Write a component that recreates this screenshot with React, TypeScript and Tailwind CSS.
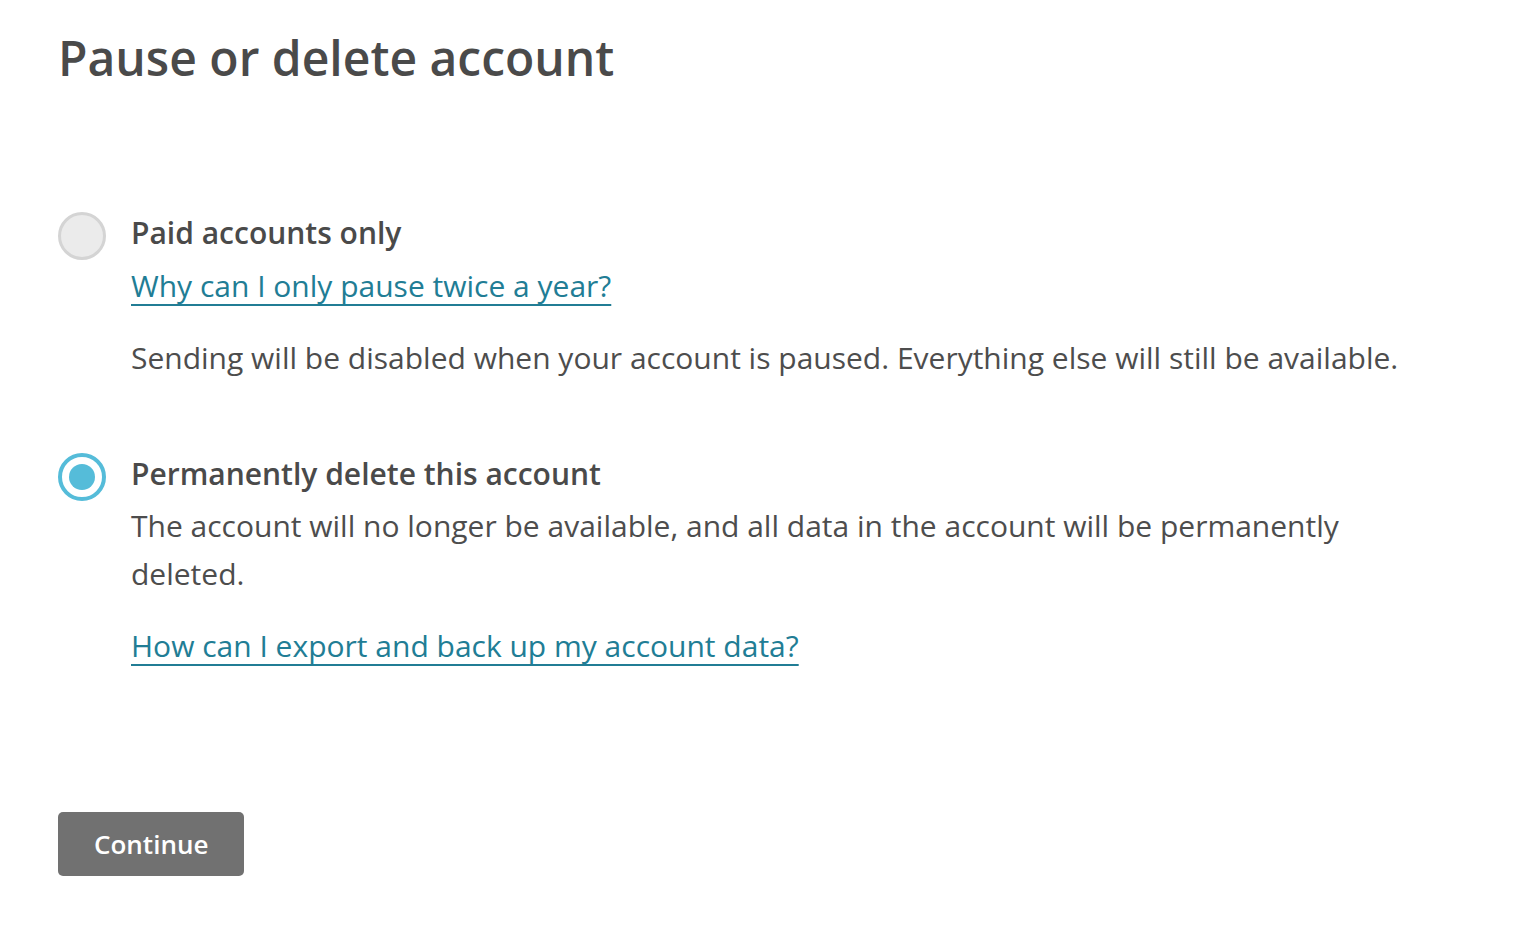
import React, { useState } from 'react';

type Choice = 'pause' | 'delete';

function Radio({ checked, onClick }: { checked: boolean; onClick: () => void }) {
  return (
    <button
      type="button"
      role="radio"
      aria-checked={checked}
      onClick={onClick}
      className={[
        'mt-[3px] flex h-12 w-12 shrink-0 items-center justify-center rounded-full',
        checked ? 'border-[4px] border-[#55bcd9] bg-white' : 'border-[3px] border-[#d4d4d4] bg-[#ebebeb]',
      ].join(' ')}
    >
      {checked ? <span className="h-[26px] w-[26px] rounded-full bg-[#55bcd9]" /> : null}
    </button>
  );
}

const linkCls =
  'inline-block text-[30px] leading-[48px] text-[#217d95] underline decoration-2 underline-offset-[7px] decoration-[#217d95] [text-decoration-skip-ink:none]';

export default function App() {
  const [choice, setChoice] = useState<Choice>('delete');

  return (
    <div className="min-h-screen bg-white px-[58px] pt-[24px] font-['Open_Sans',sans-serif] text-[#4d4d4d]">
      <h1 className="text-[48px] font-semibold leading-[68px] text-[#4a4a4a]">
        Pause or delete account
      </h1>

      <div className="mt-[117px] flex flex-col gap-[68px]">
        <div className="flex gap-[25px]">
          <Radio checked={choice === 'pause'} onClick={() => setChoice('pause')} />
          <div className="max-w-[1290px]">
            <p className="text-[30px] font-semibold leading-[48px] text-[#4a4a4a]">Paid accounts only</p>
            <a href="#" className={`mt-[5px] ${linkCls}`}>
              Why can I only pause twice a year?
            </a>
            <p className="mt-[24px] text-[30px] leading-[48px]">
              Sending will be disabled when your account is paused. Everything else will still be available.
            </p>
          </div>
        </div>

        <div className="flex gap-[25px]">
          <Radio checked={choice === 'delete'} onClick={() => setChoice('delete')} />
          <div className="max-w-[1290px]">
            <p className="text-[30px] font-semibold leading-[48px] text-[#4a4a4a]">Permanently delete this account</p>
            <p className="mt-[4px] text-[30px] leading-[48px]">
              The account will no longer be available, and all data in the account will be permanently deleted.
            </p>
            <a href="#" className={`mt-[24px] ${linkCls}`}>
              How can I export and back up my account data?
            </a>
          </div>
        </div>
      </div>

      <button
        type="button"
        className="mt-[142px] h-16 rounded-[5px] bg-[#717171] px-[36px] text-[26px] font-semibold text-white"
      >
        Continue
      </button>
    </div>
  );
}
